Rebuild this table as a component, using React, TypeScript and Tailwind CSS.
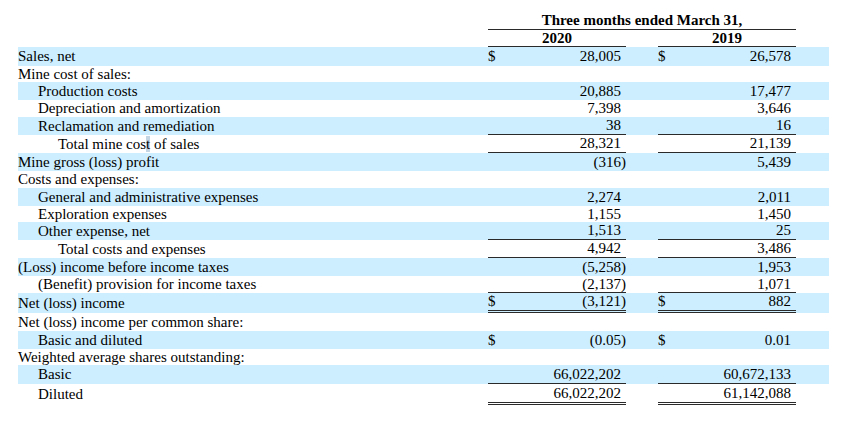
import type { ReactNode } from "react";

type Row = {
  label: ReactNode;
  indent?: string;
  a?: string;
  b?: string;
  dollar?: boolean;
  blue?: boolean;
  h: string;
  line?: string;
};

const single = "border-b border-[#2a2a2a]";
const double = "border-b-[3px] border-double border-[#2a2a2a]";

const rows: Row[] = [
  { label: "Sales, net", a: "28,005", b: "26,578", dollar: true, blue: true, h: "h-[19px]" },
  { label: "Mine cost of sales:", h: "h-[16px]" },
  { label: "Production costs", indent: "pl-[20px]", a: "20,885", b: "17,477", blue: true, h: "h-[18px]" },
  { label: "Depreciation and amortization", indent: "pl-[20px]", a: "7,398", b: "3,646", h: "h-[17px]" },
  { label: "Reclamation and remediation", indent: "pl-[20px]", a: "38", b: "16", blue: true, h: "h-[18px]", line: single },
  {
    label: (
      <span>
        Total mine cos<span className="bg-[#c4d6e4]">t</span>{" of sales"}
      </span>
    ),
    indent: "pl-[40px]",
    a: "28,321",
    b: "21,139",
    h: "h-[18px]",
    line: single,
  },
  { label: "Mine gross (loss) profit", a: "(316)", b: "5,439", blue: true, h: "h-[18px]" },
  { label: "Costs and expenses:", h: "h-[17px]" },
  { label: "General and administrative expenses", indent: "pl-[20px]", a: "2,274", b: "2,011", blue: true, h: "h-[18px]" },
  { label: "Exploration expenses", indent: "pl-[20px]", a: "1,155", b: "1,450", h: "h-[16px]" },
  { label: "Other expense, net", indent: "pl-[20px]", a: "1,513", b: "25", blue: true, h: "h-[18px]", line: single },
  { label: "Total costs and expenses", indent: "pl-[40px]", a: "4,942", b: "3,486", h: "h-[18px]", line: single },
  { label: "(Loss) income before income taxes", a: "(5,258)", b: "1,953", blue: true, h: "h-[18px]" },
  { label: "(Benefit) provision for income taxes", indent: "pl-[20px]", a: "(2,137)", b: "1,071", h: "h-[17px]", line: single },
  { label: "Net (loss) income", a: "(3,121)", b: "882", dollar: true, blue: true, h: "h-[20px]", line: double },
  { label: "Net (loss) income per common share:", h: "h-[18px]" },
  { label: "Basic and diluted", indent: "pl-[20px]", a: "(0.05)", b: "0.01", dollar: true, blue: true, h: "h-[18px]" },
  { label: "Weighted average shares outstanding:", h: "h-[16px]" },
  { label: "Basic", indent: "pl-[20px]", a: "66,022,202", b: "60,672,133", blue: true, h: "h-[19px]", line: single },
  { label: "Diluted", indent: "pl-[20px]", a: "66,022,202", b: "61,142,088", h: "h-[21px]", line: double },
];

const Amount = ({ value, dollar, line }: { value?: string; dollar?: boolean; line?: string }) => {
  const neg = value?.endsWith(")");
  return (
    <div className={`w-[138px] flex items-center justify-between ${line ?? ""}`}>
      <span>{dollar ? "$" : ""}</span>
      <span>
        {value}
        {value && !neg ? <span className="invisible">)</span> : null}
      </span>
    </div>
  );
};

export default function App() {
  return (
    <div
      className="bg-white w-[847px] h-[425px] pt-[12px] pl-[18px] text-[15px] leading-[17px] text-black"
      style={{ fontFamily: '"Liberation Serif", "Times New Roman", serif' }}
    >
      <div className="flex h-[18px]">
        <div className="w-[470px]" />
        <div className={`w-[308px] text-center font-bold ${single}`}>Three months ended March 31,</div>
      </div>
      <div className="flex h-[17px] font-bold">
        <div className="w-[470px]" />
        <div className={`w-[138px] text-center ${single}`}>2020</div>
        <div className="w-[32px]" />
        <div className={`w-[138px] text-center ${single}`}>2019</div>
      </div>
      {rows.map((r, i) => (
        <div key={i} className={`flex w-[811px] ${r.h} ${r.blue ? "bg-[#cceeff]" : ""}`}>
          <div className={`w-[470px] flex items-center whitespace-nowrap ${r.indent ?? ""}`}>{r.label}</div>
          {r.a || r.b ? (
            <>
              <Amount value={r.a} dollar={r.dollar} line={r.line} />
              <div className="w-[32px]" />
              <Amount value={r.b} dollar={r.dollar} line={r.line} />
            </>
          ) : null}
        </div>
      ))}
    </div>
  );
}
